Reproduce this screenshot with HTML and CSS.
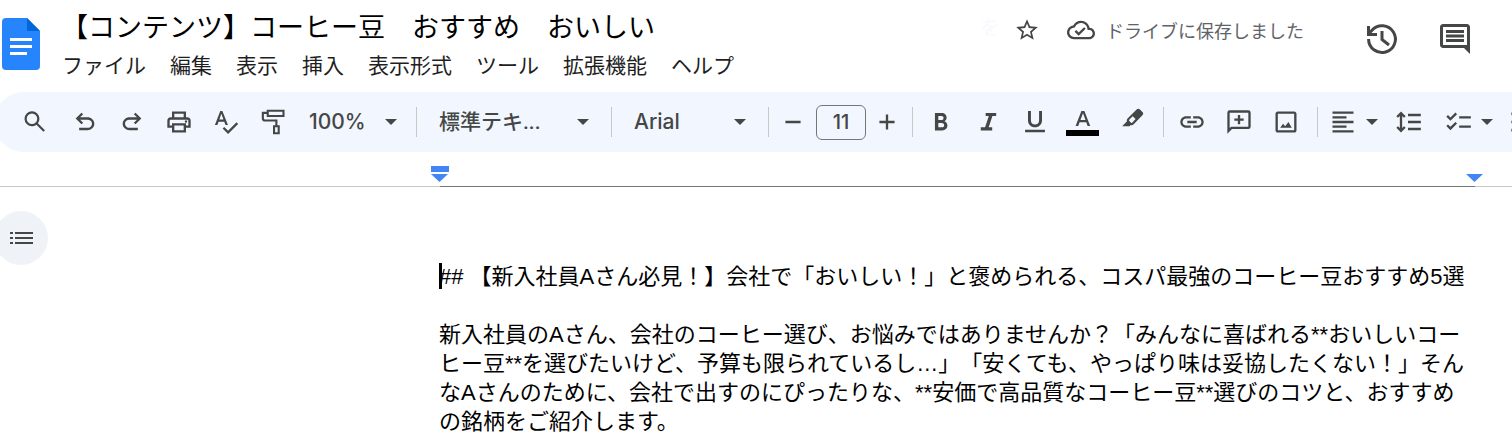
FILE: index.html
```html
<!DOCTYPE html>
<html lang="ja">
<head>
<meta charset="utf-8">
<meta name="viewport" content="width=device-width, initial-scale=1">
<title>【コンテンツ】コーヒー豆　おすすめ　おいしい</title>
<link rel="stylesheet" href="styles.css">
</head>
<body>
<header class="header">
  <a class="logo" href="#" aria-label="ドキュメント ホーム">
    <svg width="38" height="52" viewBox="0 0 38 52"><path fill="#2684fc" d="M4 0h21l13 13v35a4 4 0 0 1-4 4H4a4 4 0 0 1-4-4V4a4 4 0 0 1 4-4z"/><path fill="#0066da" d="M25 0l13 13H25z"/><path fill="#fff" d="M8 20h22v3H8zM8 27h22v3H8zM8 34h17v3H8z"/></svg>
  </a>
  <div class="heading">
    <input class="doc-title" type="text" aria-label="ドキュメント名" value="【コンテンツ】コーヒー豆　おすすめ　おいしい">
    <nav class="menu">
      <button>ファイル</button><button>編集</button><button>表示</button><button>挿入</button><button>表示形式</button><button>ツール</button><button>拡張機能</button><button>ヘルプ</button>
    </nav>
  </div>
  <div class="status">
    <span class="ghost" aria-hidden="true">を</span>
    <button class="plain" aria-label="スター"><svg width="26" height="26" viewBox="0 0 24 24"><path d="M22 9.24l-7.19-.62L12 2 9.19 8.63 2 9.24l5.46 4.73L5.82 21 12 17.27 18.18 21l-1.63-7.03L22 9.24zM12 15.4l-3.76 2.27 1-4.28-3.32-2.88 4.38-.38L12 6.1l1.71 4.04 4.38.38-3.32 2.88 1 4.28L12 15.4z"/></svg></button>
    <span class="saved"><svg width="28" height="28" viewBox="0 0 24 24"><path d="M19.35 10.04C18.67 6.59 15.64 4 12 4 9.11 4 6.6 5.64 5.35 8.04 2.34 8.36 0 10.91 0 14c0 3.31 2.69 6 6 6h13c2.76 0 5-2.24 5-5 0-2.64-2.05-4.78-4.65-4.96zM19 18H6c-2.21 0-4-1.79-4-4 0-2.05 1.53-3.76 3.56-3.97l1.07-.11.5-.95C8.08 7.14 9.94 6 12 6c2.62 0 4.88 1.86 5.39 4.43l.3 1.5 1.53.11c1.56.1 2.78 1.41 2.78 2.96 0 1.65-1.35 3-3 3zm-9-3.82l-2.09-2.09L6.5 13.5 10 17l6.01-6.01-1.41-1.41z" fill-rule="evenodd"/></svg>ドライブに保存しました</span>
  </div>
  <div class="actions">
    <button class="plain" aria-label="変更履歴"><svg class="line" width="36" height="36" viewBox="0 0 36 36" stroke-width="3"><path d="M4.6 18A13.400 13.400 0 1 0 8 9.200L4.800 12.600M4.500 5v8.500H13M18 10v8.500l7 5.500"/></svg></button>
    <button class="plain" aria-label="コメント"><svg width="36" height="36" viewBox="0 0 24 24"><path d="M21.990 4c0-1.100-.890-2-1.990-2H4c-1.100 0-2 .9-2 2v12c0 1.100.9 2 2 2h14l4 4-.010-18zM20 4v12H4V4h16zM6 12h12v2H6v-2zm0-3h12v2H6V9zm0-3h12v2H6V6z" fill-rule="evenodd"/></svg></button>
  </div>
</header>

<div class="toolbar" role="toolbar" aria-label="ツールバー">
  <button class="tool wide" aria-label="検索"><svg viewBox="0 0 24 24"><path d="M20.500 19.100l-6-6A6.300 6.300 0 0 0 15.800 9.200 6.400 6.400 0 1 0 9.400 15.600c1.500 0 2.800-.5 3.800-1.300l6 6zM9.400 13.700a4.500 4.500 0 1 1 0-9 4.500 4.500 0 0 1 0 9z"/></svg></button>
  <button class="tool" aria-label="元に戻す"><svg viewBox="0 0 24 24"><path d="M7 19v-2h7.100c1.050 0 1.960-.330 2.740-1s1.160-1.500 1.160-2.500-.390-1.830-1.160-2.500S15.150 10 14.100 10H7.800l2.600 2.600L9 14 4 9l5-5 1.400 1.400L7.800 8h6.300c1.620 0 3 .530 4.160 1.580S20 11.930 20 13.500s-.580 2.880-1.740 3.930S15.720 19 14.100 19z"/></svg></button>
  <button class="tool" aria-label="やり直し"><svg viewBox="0 0 24 24"><path d="M9.900 19c-1.620 0-3-.530-4.160-1.580S4 15.070 4 13.500s.580-2.880 1.740-3.930S8.280 8 9.900 8h6.300l-2.600-2.600L15 4l5 5-5 5-1.400-1.400 2.600-2.600H9.900c-1.050 0-1.960.330-2.740 1S6 12.500 6 13.500s.390 1.830 1.160 2.500S8.850 17 9.900 17H17v2z"/></svg></button>
  <button class="tool" aria-label="印刷"><svg viewBox="0 0 24 24"><path fill-rule="evenodd" d="M6 8V3h12v5h1a3 3 0 0 1 3 3v6h-4v4H6v-4H2v-6a3 3 0 0 1 3-3zm2 0h8V5H8zM6 15v-2h12v2h2v-4a1 1 0 0 0-1-1H5a1 1 0 0 0-1 1v4zm2 0v4h8v-4z"/><circle cx="18" cy="11.600" r="1"/></svg></button>
  <button class="tool" aria-label="スペルと文法のチェック"><svg class="raised" viewBox="0 0 24 24"><path d="M11.600 14.500h2.100L8.900 2.500H7.100L2.500 14.500h2.100l1-2.800h4.900zM6.300 9.900L8 5l1.800 4.900zM21 12.300l-7.200 7.200L10.500 16.200 9.100 17.600l4.700 4.700 8.600-8.600z"/></svg></button>
  <button class="tool" aria-label="書式を貼り付け"><svg class="line" viewBox="0 0 24 24" stroke-width="1.800"><path d="M7.500 2.400H21v4.400H7.500zM7.500 4.200H3.300v4.500q0 2 2 2h9.600v5M12.900 15.700h4v6h-4z"/></svg></button>
  <label class="pick pick-zoom"><select aria-label="ズーム"><option>100%</option></select><svg class="caret" viewBox="0 0 12 6"><path d="M0 0h12L6 6z"/></svg></label>
  <span class="sep"></span>
  <label class="pick pick-style"><select aria-label="スタイル"><option>標準テキ...</option></select><svg class="caret" viewBox="0 0 12 6"><path d="M0 0h12L6 6z"/></svg></label>
  <span class="sep"></span>
  <label class="pick pick-font"><select aria-label="フォント"><option>Arial</option></select><svg class="caret" viewBox="0 0 12 6"><path d="M0 0h12L6 6z"/></svg></label>
  <span class="sep"></span>
  <button class="tool" aria-label="フォントサイズを縮小"><svg viewBox="0 0 24 24"><path d="M5.500 11h13v2h-13z"/></svg></button>
  <input class="size" type="text" aria-label="フォントサイズ" value="11">
  <button class="tool slim" aria-label="フォントサイズを拡大"><svg viewBox="0 0 24 24"><path d="M5.500 11H11V5.500h2V11h5.500v2H13v5.500h-2V13H5.500z"/></svg></button>
  <span class="sep gap-before gap-after"></span>
  <button class="tool" aria-label="太字"><svg viewBox="0 0 24 24"><path fill-rule="evenodd" d="M6.800 4.200h6c2.200 0 4 1.700 4 3.900 0 1.400-.7 2.600-1.800 3.200 1.600.6 2.500 2 2.500 3.700 0 2.500-1.900 4.200-4.400 4.200H6.800zm2.900 2.600v3.500h2.700c1.100 0 1.800-.8 1.800-1.800s-.7-1.700-1.800-1.700zm0 6v3.800h3.100c1.200 0 1.900-.8 1.900-1.900s-.8-1.900-1.900-1.900z"/></svg></button>
  <button class="tool" aria-label="斜体"><svg viewBox="0 0 24 24"><path d="M10 4.200h9v2.700h-3.200l-3.200 9.600h3V19.200H5.800v-2.700h3.700l3.200-9.600H10z"/></svg></button>
  <button class="tool" aria-label="下線"><svg viewBox="0 0 24 24"><path d="M12 16.500c3.500 0 6-2.300 6-6V2.500h-2.500v8.200c0 2.100-1.400 3.500-3.500 3.500s-3.500-1.400-3.500-3.500V2.500H6v8c0 3.700 2.500 6 6 6zM3.500 18.700h17v2h-17z"/></svg></button>
  <button class="tool color" aria-label="テキストの色"><svg viewBox="0 0 33 28"><path fill-rule="evenodd" d="M15.400 3h3l5.800 15h-2.600l-1.300-3.800h-6.700L12.200 18H9.600zm-1 9.100h5.100L17 5.200z"/><path fill="#000" d="M0 22h33v6H0z"/></svg></button>
  <button class="tool wide" aria-label="ハイライトの色"><svg viewBox="0 0 28 28"><path fill-rule="evenodd" d="M3.200 18.200L8 13.200q-.6-1.600.8-3L17.600 1.500q1.700-1.700 3.400 0l2.400 2.400q1.700 1.700 0 3.400l-8.700 8.900q-1.400 1.400-3 .8l-1.200 1.200zm7-6.400q-.5.500 0 1l1.900 1.900q.5.500 1 0l3.500-3.600-2.900-2.900z"/></svg></button>
  <span class="sep gap-before gap-after"></span>
  <button class="tool" aria-label="リンクを挿入"><svg viewBox="0 0 24 24"><path d="M3.900 12c0-1.710 1.390-3.100 3.100-3.100h4V7H7c-2.760 0-5 2.240-5 5s2.240 5 5 5h4v-1.900H7c-1.710 0-3.100-1.390-3.100-3.100zM8 13h8v-2H8v2zm9-6h-4v1.900h4c1.710 0 3.100 1.390 3.100 3.100s-1.390 3.100-3.100 3.100h-4V17h4c2.760 0 5-2.240 5-5s-2.240-5-5-5z"/></svg></button>
  <button class="tool" aria-label="コメントを追加"><svg viewBox="0 0 24 24"><path fill-rule="evenodd" d="M2 22V4a2 2 0 0 1 2-2h16a2 2 0 0 1 2 2v12a2 2 0 0 1-2 2H6zM4 17.200L5.200 16H20V4H4zM11 14v-3H8V9h3V6h2v3h3v2h-3v3z"/></svg></button>
  <button class="tool" aria-label="画像を挿入"><svg viewBox="0 0 24 24"><path d="M19 5v14H5V5h14m0-2H5c-1.100 0-2 .9-2 2v14c0 1.100.9 2 2 2h14c1.100 0 2-.9 2-2V5c0-1.100-.9-2-2-2zm-2 14H7l2.500-3.500 1.800 2.200 2.800-3.700z"/></svg></button>
  <span class="sep gap-wide"></span>
  <button class="tool group" aria-label="配置"><svg viewBox="0 0 24 24"><path d="M15 15H3v2h12v-2zm0-8H3v2h12V7zM3 13h18v-2H3v2zm0 8h18v-2H3v2zM3 3v2h18V3H3z"/></svg><svg class="caret" viewBox="0 0 12 6"><path d="M0 0h12L6 6z"/></svg></button>
  <button class="tool group spaced" aria-label="行間隔"><svg viewBox="0 0 24 24"><path d="M12 5h11v2H12zM12 11h11v2H12zM12 17h11v2H12zM6 3l4 4-1.400 1.400L7 6.800v10.400l1.600-1.600L10 17l-4 4-4-4 1.400-1.400L5 17.200V6.800L3.400 8.400 2 7z"/></svg></button>
  <button class="tool group" aria-label="チェックリスト"><svg viewBox="0 0 24 24"><path d="M23 7H13v2h10V7zm0 8H13v2h10v-2zM5.540 11L2 7.460l1.410-1.410 2.120 2.120 4.240-4.240 1.410 1.410L5.540 11zm0 8L2 15.460l1.410-1.410 2.120 2.120 4.240-4.240 1.410 1.410L5.540 19z"/></svg><svg class="caret" viewBox="0 0 12 6"><path d="M0 0h12L6 6z"/></svg></button>
  <button class="tool group" aria-label="箇条書き"><svg viewBox="0 0 24 24"><circle cx="4" cy="5" r="2"/><circle cx="4" cy="12" r="2"/><circle cx="4" cy="19" r="2"/><path d="M9 4h12v2H9zM9 11h12v2H9zM9 18h12v2H9z"/></svg></button>
</div>

<div class="ruler">
  <div class="ruler-range">
    <svg class="marker" width="18" height="16" viewBox="0 0 18 16"><path d="M0 0h18v6H0zM0 8h17l-8.500 8z"/></svg>
    <svg class="marker" width="18" height="16" viewBox="0 0 18 16"><path d="M0 8h17l-8.500 8z"/></svg>
  </div>
</div>

<main class="workspace">
  <aside class="side">
    <button class="outline" aria-label="アウトラインを表示"><svg width="24" height="14" viewBox="0 0 24 14"><path d="M1 1h3v2H1zM6 1h18v2H6zM1 6h3v2H1zM6 6h18v2H6zM1 11h3v2H1zM6 11h18v2H6z"/></svg></button>
  </aside>
  <article class="page">
    <p><span class="cursor"></span>## 【新入社員Aさん必見！】会社で「おいしい！」と褒められる、コスパ最強のコーヒー豆おすすめ5選</p>
    <p>新入社員のAさん、会社のコーヒー選び、お悩みではありませんか？「みんなに喜ばれる**おいしいコーヒー豆**を選びたいけど、予算も限られているし…」「安くても、やっぱり味は妥協したくない！」そんなAさんのために、会社で出すのにぴったりな、**安価で高品質なコーヒー豆**選びのコツと、おすすめの銘柄をご紹介します。</p>
  </article>
</main>
</body>
</html>
```
FILE: styles.css
```css
* { box-sizing: border-box; }
body {
  margin: 0;
  background: #fff;
  color: #1f1f1f;
  font-family: "Noto Sans CJK JP", sans-serif;
  text-spacing-trim: space-all;
  overflow-x: hidden;
}
button, input, select {
  font: inherit;
  color: inherit;
  border: 0;
  padding: 0;
  margin: 0;
  background: none;
  text-spacing-trim: inherit;
}
svg { display: block; flex: none; fill: #444746; }
svg.line { fill: none; stroke: #444746; }

.header { display: flex; align-items: flex-start; height: 92px; padding: 0 39px 0 2px; }
.logo { padding-top: 18px; }
.heading { flex: 1; min-width: 0; padding: 6px 0 0 21px; }
.doc-title { display: block; width: 100%; height: 40px; font-size: 27px; line-height: 40px; color: #000; }
.menu { display: flex; gap: 24px; padding-left: 1px; font-size: 21px; line-height: 36px; white-space: nowrap; }
.status { display: flex; align-items: center; height: 60px; white-space: nowrap; }
.ghost { margin-right: 14px; padding-bottom: 8px; font-size: 20px; color: #f8fafd; }
.plain { display: block; }
.saved { display: flex; align-items: center; gap: 11px; margin-left: 27px; font-size: 18px; color: #5f6368; }
.actions { display: flex; gap: 37px; margin-left: 60px; padding-top: 21px; }

.toolbar {
  display: flex;
  align-items: center;
  height: 60px;
  margin-left: -6px;
  padding-left: 15px;
  overflow: hidden;
  border-radius: 30px 0 0 30px;
  background: #f2f6fe;
  color: #444746;
}
.tool { display: flex; flex: none; align-items: center; justify-content: center; width: 47px; height: 48px; }
.tool svg { width: 28px; height: 28px; }
.tool.wide { width: 52px; }
.tool.slim { width: 42px; }
.tool.color { width: 49px; }
.tool.color svg { width: 33px; }
.tool.group { width: auto; gap: 9px; padding: 0 5px 0 11px; }
.tool.spaced { padding-right: 11px; }
.tool .caret, .caret { width: 12px; height: 6px; }
.sep { flex: none; width: 1px; height: 30px; background: #c7c7c7; }
.gap-before { margin-left: 4px; }
.gap-after { margin-right: 4px; }
.gap-wide { margin-left: 8px; }
.pick { display: grid; flex: none; align-items: center; font: 500 21px/32px Inter, sans-serif; }
.pick select { grid-area: 1 / 1; width: 100%; height: 32px; padding-left: 22px; appearance: none; }
.pick .caret { grid-area: 1 / 1; justify-self: end; margin-right: 22px; pointer-events: none; }
.pick-zoom { width: 120px; }
.pick-zoom select { padding-left: 13px; }
.pick-zoom .caret { margin-right: 19px; }
.pick-style { width: 194px; font-family: Roboto, "Noto Sans CJK JP", sans-serif; }
.pick-font { width: 156px; }
.size {
  flex: none;
  width: 50px;
  height: 35px;
  border: 1px solid #747775;
  border-radius: 6px;
  text-align: center;
  font: 500 20px/32px Inter, sans-serif;
}

.ruler { height: 35px; padding: 0 37px 0 440px; border-bottom: 1px solid #c4c7c5; }
.ruler-range { display: flex; justify-content: space-between; height: 35px; padding-top: 14px; border-bottom: 1px solid #747775; }
.marker { margin: 0 -9px; fill: #4285f4; }

.workspace { display: flex; align-items: flex-start; }
.side { flex: none; width: 439px; padding-top: 24px; }
.outline { display: flex; align-items: center; justify-content: center; width: 54px; height: 54px; margin-left: -6px; border-radius: 50%; background: #eff3f8; }
.page { flex: 1; min-width: 0; padding: 75px 37px 0 0; font: 22px/29px "Liberation Sans", "Noto Sans CJK JP", sans-serif; color: #000; }
.page p { position: relative; margin: 0; }
.page p + p { margin-top: 29px; }
.cursor { position: absolute; left: 0; top: 1px; width: 3px; height: 26px; background: #000; }
```
